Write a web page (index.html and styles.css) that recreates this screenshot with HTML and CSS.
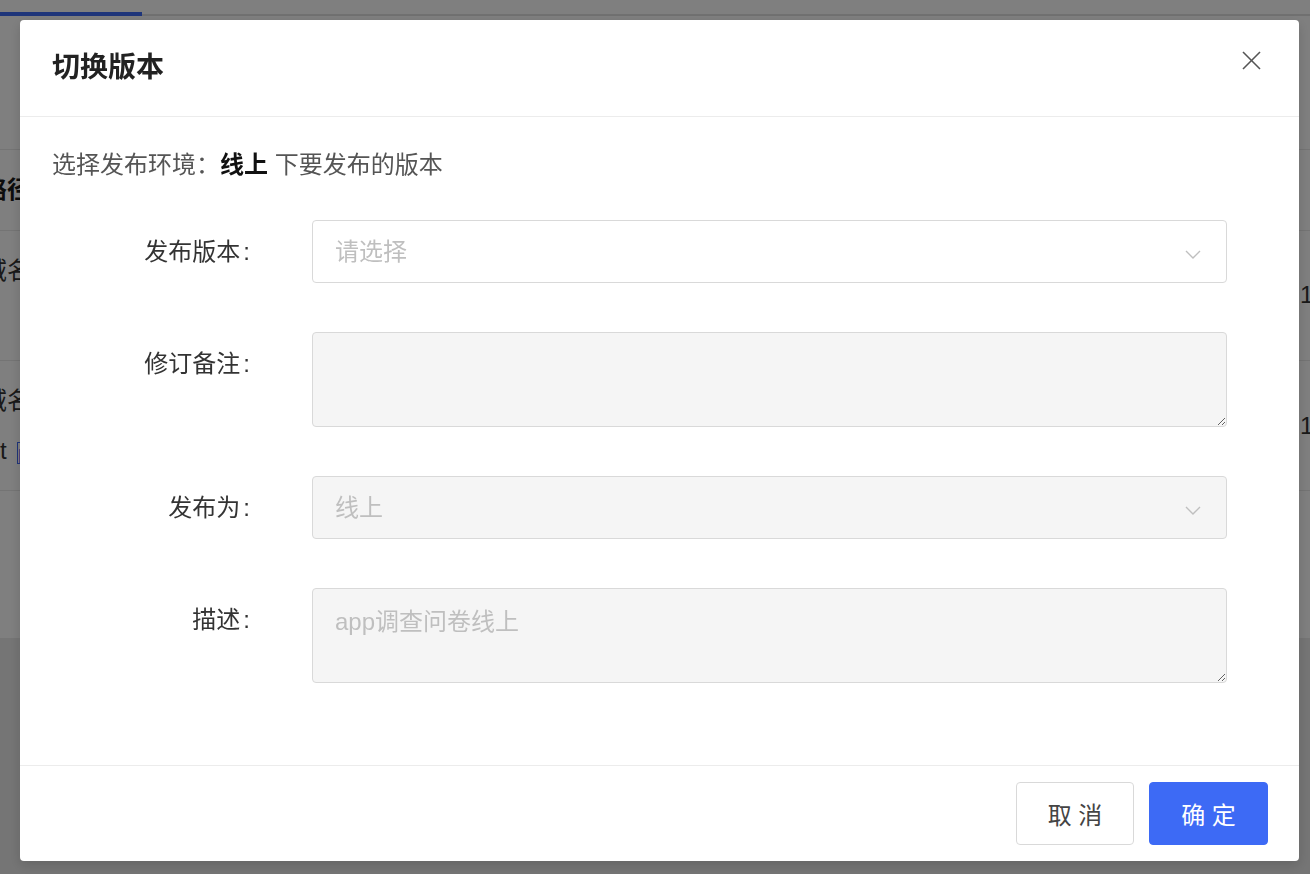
FILE: index.html
```html
<!DOCTYPE html>
<html lang="zh-CN">
<head>
    <meta charset="UTF-8">
    <meta name="viewport" content="width=device-width, initial-scale=1.0">
    <title>切换版本</title>
    <link rel="stylesheet" href="styles.css">
</head>
<body>

    <!-- page behind the dialog -->
    <div class="page">
        <div class="tabs"><span class="tab-active"></span></div>
        <div class="list">
            <div class="list-row list-head">
                <span class="cell-left strong">路径</span>
            </div>
            <div class="list-row">
                <div class="cell-left"><div>域名</div></div>
                <span class="cell-right">12</span>
            </div>
            <div class="list-row">
                <div class="cell-left">
                    <div>域名</div>
                    <div class="cell-line">t <span class="tag">[</span></div>
                </div>
                <span class="cell-right row-two">1</span>
            </div>
        </div>
    </div>

    <div class="mask"></div>

    <div class="modal-wrap">
        <div class="modal">
            <div class="modal-header">
                <div class="modal-title">切换版本</div>
                <button class="modal-close" title="关闭">
                    <svg width="19" height="19" viewBox="0 0 19 19">
                        <line x1="1" y1="1" x2="18" y2="18" stroke="#555" stroke-width="1.6"/>
                        <line x1="18" y1="1" x2="1" y2="18" stroke="#555" stroke-width="1.6"/>
                    </svg>
                </button>
            </div>

            <div class="modal-body">
                <p class="env-tip">选择发布环境：<b>线上</b> 下要发布的版本</p>

                <div class="form-row">
                    <label class="form-label">发布版本<span class="colon">:</span></label>
                    <div class="select">
                        <span class="select-text">请选择</span>
                        <svg class="select-arrow" width="16" height="9" viewBox="0 0 16 9">
                            <polyline points="1,1 8,8 15,1" fill="none" stroke="#bfbfbf" stroke-width="1.4"/>
                        </svg>
                    </div>
                </div>

                <div class="form-row">
                    <label class="form-label">修订备注<span class="colon">:</span></label>
                    <textarea class="textarea" disabled></textarea>
                </div>

                <div class="form-row">
                    <label class="form-label">发布为<span class="colon">:</span></label>
                    <div class="select is-disabled">
                        <span class="select-text">线上</span>
                        <svg class="select-arrow" width="16" height="9" viewBox="0 0 16 9">
                            <polyline points="1,1 8,8 15,1" fill="none" stroke="#bfbfbf" stroke-width="1.4"/>
                        </svg>
                    </div>
                </div>

                <div class="form-row">
                    <label class="form-label">描述<span class="colon">:</span></label>
                    <textarea class="textarea" disabled placeholder="app调查问卷线上"></textarea>
                </div>
            </div>

            <div class="modal-footer">
                <button class="btn">取 消</button>
                <button class="btn btn-primary">确 定</button>
            </div>
        </div>
    </div>

</body>
</html>
```

FILE: styles.css
```css
body {
    margin: 0;
    font-family: "Liberation Sans", "Noto Sans CJK SC", sans-serif;
    background-color: #ebebeb;
    overflow: hidden;
}

/* background page */
.page {
    height: 874px;
}

.tabs {
    height: 14px;
    background-color: #fff;
    border-bottom: 2px solid #e0e0e0;
    display: flex;
    align-items: flex-end;
}

.tab-active {
    width: 142px;
    height: 4px;
    margin-bottom: -2px;
    background-color: #3d6af5;
}

.list {
    height: 622px;
    padding-top: 133px;
    box-sizing: border-box;
    background-color: #fff;
}

.list-row {
    height: 130px;
    box-sizing: border-box;
    border-top: 1px solid #e8e8e8;
    display: flex;
    justify-content: space-between;
    font-size: 24px;
    line-height: 24px;
    color: #333;
}

.list-row:last-child {
    height: 131px;
    border-bottom: 1px solid #e8e8e8;
}

.list-head {
    height: 81px;
    align-items: center;
}

.cell-left {
    margin-left: -17px;
    padding-top: 28px;
}

.list-head .cell-left {
    padding-top: 0;
}

.strong {
    font-weight: 700;
    color: #1a1a1a;
}

.cell-line {
    margin-top: 26px;
    margin-left: 17px;
}

.tag {
    display: inline-block;
    width: 10px;
    height: 20px;
    margin-left: 4px;
    border: 1px solid #3d6af5;
    color: #3d6af5;
    font-size: 14px;
    vertical-align: middle;
}

.cell-right {
    width: 40px;
    margin-right: -30px;
    padding-top: 52px;
}

.row-two {
    padding-top: 53px;
    margin-left: -2px;
}

/* dialog */
.mask {
    position: fixed;
    inset: 0;
    background-color: rgba(0, 0, 0, 0.5);
}

.modal-wrap {
    position: fixed;
    inset: 0;
    padding: 20px;
}

.modal {
    width: 1279px;
    background-color: #fff;
    border-radius: 4px;
    box-shadow: 0 4px 12px rgba(0, 0, 0, 0.15);
}

.modal-header {
    height: 96px;
    padding: 0 32px;
    border-bottom: 1px solid #ececec;
    display: flex;
    justify-content: space-between;
}

.modal-title {
    align-self: center;
    font-size: 28px;
    line-height: 40px;
    font-weight: 700;
    color: #222;
}

.modal-close {
    width: 19px;
    height: 19px;
    padding: 0;
    margin-top: 31px;
    margin-right: 6px;
    border: none;
    background: none;
    cursor: pointer;
}

.modal-close svg {
    display: block;
}

.modal-body {
    padding: 30px 32px 33px;
}

.env-tip {
    margin: 0 0 37px;
    font-size: 24px;
    line-height: 36px;
    color: #555;
}

.env-tip b {
    color: #111;
    font-weight: 700;
}

.form-row {
    display: flex;
    align-items: flex-start;
    margin-bottom: 49px;
}

.form-label {
    width: 198px;
    flex-shrink: 0;
    text-align: right;
    font-size: 24px;
    line-height: 63px;
    color: #333;
}

.colon {
    margin-left: 3px;
}

.select,
.textarea {
    width: 915px;
    margin-left: 62px;
    box-sizing: border-box;
    border: 1px solid #d9d9d9;
    border-radius: 4px;
}

.select {
    height: 63px;
    padding: 0 25px 0 22px;
    display: flex;
    align-items: center;
    justify-content: space-between;
    background-color: #fff;
}

.select.is-disabled {
    background-color: #f5f5f5;
}

.select-text {
    font-size: 24px;
    line-height: 36px;
    color: #bfbfbf;
}

.select-arrow {
    margin-top: 5px;
}

.textarea {
    display: block;
    height: 95px;
    padding: 15px 22px;
    font-family: inherit;
    font-size: 24px;
    line-height: 36px;
    color: #bfbfbf;
    background-color: #f5f5f5;
    resize: vertical;
}

.textarea::placeholder {
    color: #bfbfbf;
}

.modal-footer {
    padding: 16px 31px;
    border-top: 1px solid #ececec;
    display: flex;
    justify-content: flex-end;
    gap: 15px;
}

.btn {
    width: 118px;
    height: 63px;
    padding: 0;
    font-family: inherit;
    font-size: 24px;
    color: #444;
    background-color: #fff;
    border: 1px solid #d9d9d9;
    border-radius: 4px;
    cursor: pointer;
}

.btn-primary {
    width: 119px;
    color: #fff;
    background-color: #3d6af5;
    border-color: #3d6af5;
}
```
